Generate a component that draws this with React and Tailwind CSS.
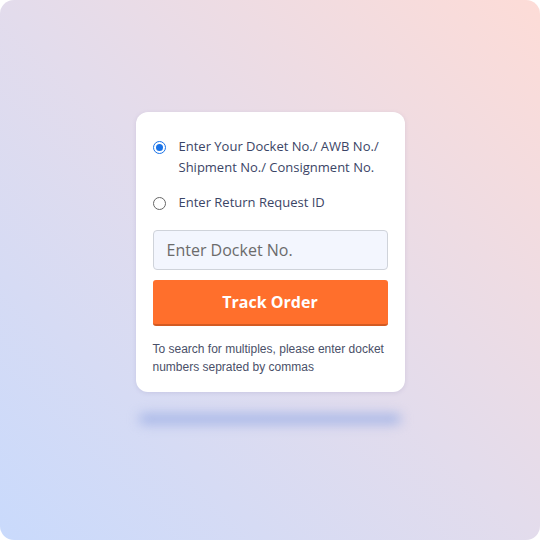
import React from "react";

// Docket tracking card on a soft gradient backdrop
export default function App() {
  return (
    <div className="w-[540px] h-[540px] bg-white">
      <div className="w-full h-full rounded-[14px] bg-[linear-gradient(to_top_right,#c9dafc_0%,#e3dcec_50%,#fddcd7_100%)] flex flex-col items-center pt-[112px]">
        {/*Card*/}
        <div className="w-[269px] bg-white rounded-[12px] shadow-[0_1px_4px_rgba(120,110,160,0.18)] px-[17px] pt-[24px] pb-[16px] font-['Open_Sans',sans-serif]">
          <label className="flex items-start gap-[13px] text-[13px] leading-[21px] text-[#3b4566]">
            <span className="mt-[5px] shrink-0 w-[13px] h-[13px] rounded-full border-[1.5px] border-[#1a73e8] flex items-center justify-center">
              <span className="w-[7px] h-[7px] rounded-full bg-[#1a73e8]" />
            </span>
            <span>Enter Your Docket No./ AWB No./ Shipment No./ Consignment No.</span>
          </label>
          <label className="mt-[14px] flex items-start gap-[13px] text-[13px] leading-[21px] text-[#3b4566]">
            <span className="mt-[5px] shrink-0 w-[13px] h-[13px] rounded-full border border-[#666]" />
            <span>Enter Return Request ID</span>
          </label>

          <div className="mt-[17px] h-[40px] rounded-[4px] border border-[#cfd3da] bg-[#f3f6fe] flex items-center px-[13px] text-[16px] text-[#6b6b6b]">
            Enter Docket No.
          </div>

          <button className="mt-[10px] w-full h-[46px] rounded-[3px] bg-[#ff6f2c] border-b-[2px] border-[#d35a22] text-white text-[16px] font-bold">
            Track Order
          </button>

          <p className="mt-[14px] font-['Liberation_Sans',Arial,sans-serif] text-[12px] leading-[18px] text-[#4a5068]">
            To search for multiples, please enter docket numbers seprated by commas
          </p>
        </div>

        {/*Floor shadow*/}
        <div className="mt-[22px] w-[262px] h-[10px] rounded-full bg-[#a4b4e6] blur-[6px]" />
      </div>
    </div>
  );
}
